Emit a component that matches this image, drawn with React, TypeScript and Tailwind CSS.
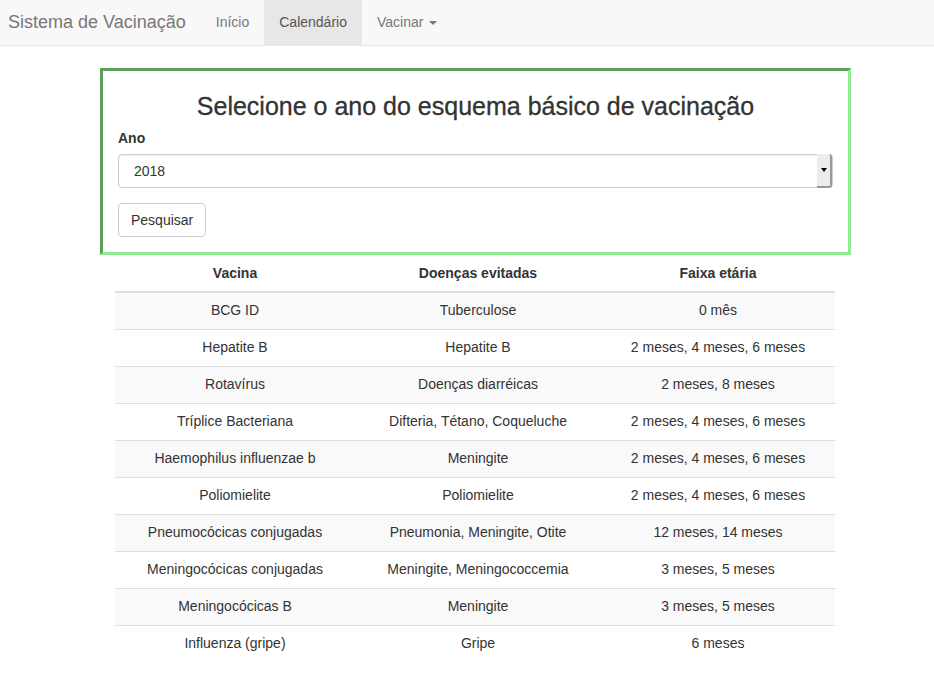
const rows = [
  ["BCG ID", "Tuberculose", "0 mês"],
  ["Hepatite B", "Hepatite B", "2 meses, 4 meses, 6 meses"],
  ["Rotavírus", "Doenças diarréicas", "2 meses, 8 meses"],
  ["Tríplice Bacteriana", "Difteria, Tétano, Coqueluche", "2 meses, 4 meses, 6 meses"],
  ["Haemophilus influenzae b", "Meningite", "2 meses, 4 meses, 6 meses"],
  ["Poliomielite", "Poliomielite", "2 meses, 4 meses, 6 meses"],
  ["Pneumocócicas conjugadas", "Pneumonia, Meningite, Otite", "12 meses, 14 meses"],
  ["Meningocócicas conjugadas", "Meningite, Meningococcemia", "3 meses, 5 meses"],
  ["Meningocócicas B", "Meningite", "3 meses, 5 meses"],
  ["Influenza (gripe)", "Gripe", "6 meses"],
];

const Navbar = () => {
  return (
    <nav className="flex h-[46px] items-stretch border-b border-[#e7e7e7] bg-[#f8f8f8]">
      <a className="flex items-center pl-[8px] pr-[15px] text-[18px] text-[#777]">
        Sistema de Vacinação
      </a>
      <ul className="flex items-stretch text-[14px] text-[#777]">
        <li className="flex items-center px-[15px]">Início</li>
        <li className="flex items-center bg-[#e7e7e7] px-[15px] text-[#555]">
          Calendário
        </li>
        <li className="flex items-center px-[15px]">
          Vacinar
          <span className="ml-[6px] inline-block h-0 w-0 border-x-[4px] border-t-[4px] border-x-transparent border-t-[#777]" />
        </li>
      </ul>
    </nav>
  );
};

export default function App() {
  return (
    <div className="min-h-[690px] bg-white font-['Liberation_Sans',Arial,sans-serif] text-[14px] text-[#333]">
      <Navbar />

      <div className="ml-[100px] mt-[22px] w-[751px]">
        {/* search box */}
        <div className="border-[3px] border-t-[#5c9e5c] border-l-[#5c9e5c] border-b-[#90ee90] border-r-[#90ee90] px-[15px] pb-[15px] pt-[20px]">
          <h2 className="text-center text-[25px] leading-[30px] text-[#333] [-webkit-text-stroke:0.3px_#333]">
            Selecione o ano do esquema básico de vacinação
          </h2>
          <label className="mt-[7px] block text-[14px] font-bold">Ano</label>
          <div className="mt-[5px] flex h-[34px] items-stretch rounded-[4px] border border-[#ccc] shadow-[inset_0_1px_1px_rgba(0,0,0,0.075)]">
            <div className="flex flex-1 items-center pl-[15px]">2018</div>
            <div className="my-[-1px] flex w-[15px] items-center justify-center rounded-r-[3px] border-r-2 border-b-2 border-[#999] bg-[#ececec]">
              <span className="inline-block h-0 w-0 border-x-[3px] border-t-[4px] border-x-transparent border-t-black" />
            </div>
          </div>
          <button className="mt-[15px] h-[34px] rounded-[4px] border border-[#ccc] bg-white px-[12px] text-[14px] text-[#333]">
            Pesquisar
          </button>
        </div>

        {/* table */}
        <table className="ml-[15px] w-[720px] border-collapse text-center">
          <thead>
            <tr className="border-b-2 border-[#ddd]">
              <th className="h-[37px] px-[8px] font-bold">Vacina</th>
              <th className="h-[37px] px-[8px] font-bold">Doenças evitadas</th>
              <th className="h-[37px] px-[8px] font-bold">Faixa etária</th>
            </tr>
          </thead>
          <tbody>
            {rows.map((r, i) => (
              <tr
                key={r[0]}
                className={
                  (i % 2 === 0 ? "bg-[#f9f9f9] " : "bg-white ") +
                  (i < rows.length - 1 ? "border-b border-[#ddd]" : "")
                }
              >
                <td className="h-[37px] w-[240px] px-[8px]">{r[0]}</td>
                <td className="h-[37px] w-[246px] px-[8px]">{r[1]}</td>
                <td className="h-[37px] px-[8px]">{r[2]}</td>
              </tr>
            ))}
          </tbody>
        </table>
      </div>
    </div>
  );
}
